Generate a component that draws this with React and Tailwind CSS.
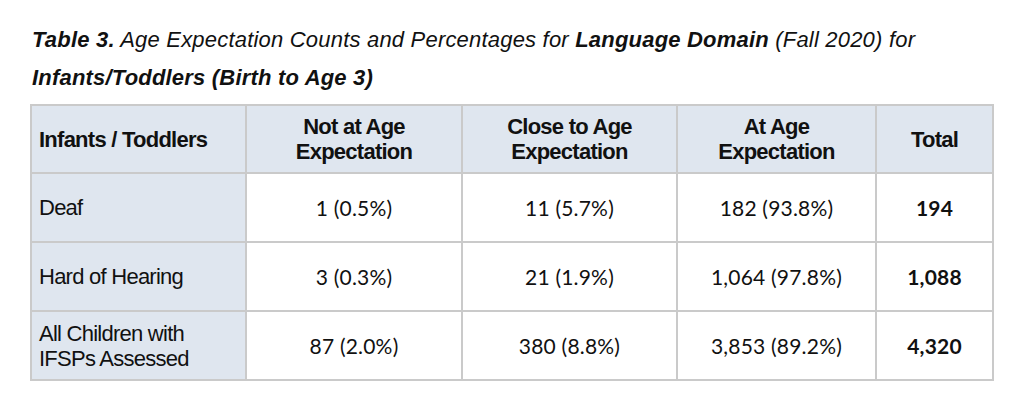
import React from "react";

const rows = [
  { label: "Deaf", a: "1 (0.5%)", b: "11 (5.7%)", c: "182 (93.8%)", t: "194" },
  { label: "Hard of Hearing", a: "3 (0.3%)", b: "21 (1.9%)", c: "1,064 (97.8%)", t: "1,088" },
  { label: ["All Children with", "IFSPs Assessed"], a: "87 (2.0%)", b: "380 (8.8%)", c: "3,853 (89.2%)", t: "4,320" },
];

const arial = { fontFamily: '"Liberation Sans", Arial, sans-serif' };
const cal = { fontFamily: 'Lato, "Open Sans", sans-serif' };

export default function App() {
  return (
    <div className="w-[1018px] h-[402px] bg-white overflow-hidden text-[#111]">
      <div
        className="pl-[32px] pt-[21px] text-[22px] leading-[38px] italic tracking-[0.2px]"
        style={arial}
      >
        <div>
          <span className="font-bold">Table 3.</span> Age Expectation Counts and Percentages for{" "}
          <span className="font-bold">Language Domain</span> (Fall 2020) for
        </div>
        <div className="font-bold">Infants/Toddlers (Birth to Age 3)</div>
      </div>
      <table className="ml-[30px] mt-[7px] border-collapse table-fixed w-[962px]">
        <colgroup>
          <col className="w-[215px]" />
          <col className="w-[216px]" />
          <col className="w-[215px]" />
          <col className="w-[199px]" />
          <col className="w-[117px]" />
        </colgroup>
        <thead>
          <tr className="h-[68px] bg-[#dfe6ef]">
            <th className="border-2 border-[#cacaca] text-left pl-[7px] font-bold text-[22px] leading-[25px] tracking-[-0.75px]" style={arial}>
              Infants / Toddlers
            </th>
            {[["Not at Age", "Expectation"], ["Close to Age", "Expectation"], ["At Age", "Expectation"]].map((h, i) => (
              <th key={i} className="border-2 border-[#cacaca] text-center font-bold text-[22px] leading-[25px] tracking-[-0.75px]" style={arial}>
                {h[0]}
                <br />
                {h[1]}
              </th>
            ))}
            <th className="border-2 border-[#cacaca] text-center font-bold text-[22px] tracking-[-0.75px]" style={arial}>
              Total
            </th>
          </tr>
        </thead>
        <tbody>
          {rows.map((r, i) => (
            <tr key={i} className="h-[69px]">
              <td className="border-2 border-[#cacaca] bg-[#dfe6ef] pl-[7px] text-[22px] leading-[25px] tracking-[-0.75px]" style={arial}>
                {Array.isArray(r.label) ? (
                  <>
                    {r.label[0]}
                    <br />
                    {r.label[1]}
                  </>
                ) : (
                  r.label
                )}
              </td>
              {[r.a, r.b, r.c].map((v, j) => (
                <td key={j} className="border-2 border-[#cacaca] text-center text-[21px] tracking-[0.2px]" style={cal}>
                  {v}
                </td>
              ))}
              <td className="border-2 border-[#cacaca] text-center text-[21px] font-bold tracking-[0.2px]" style={cal}>
                {r.t}
              </td>
            </tr>
          ))}
        </tbody>
      </table>
    </div>
  );
}
